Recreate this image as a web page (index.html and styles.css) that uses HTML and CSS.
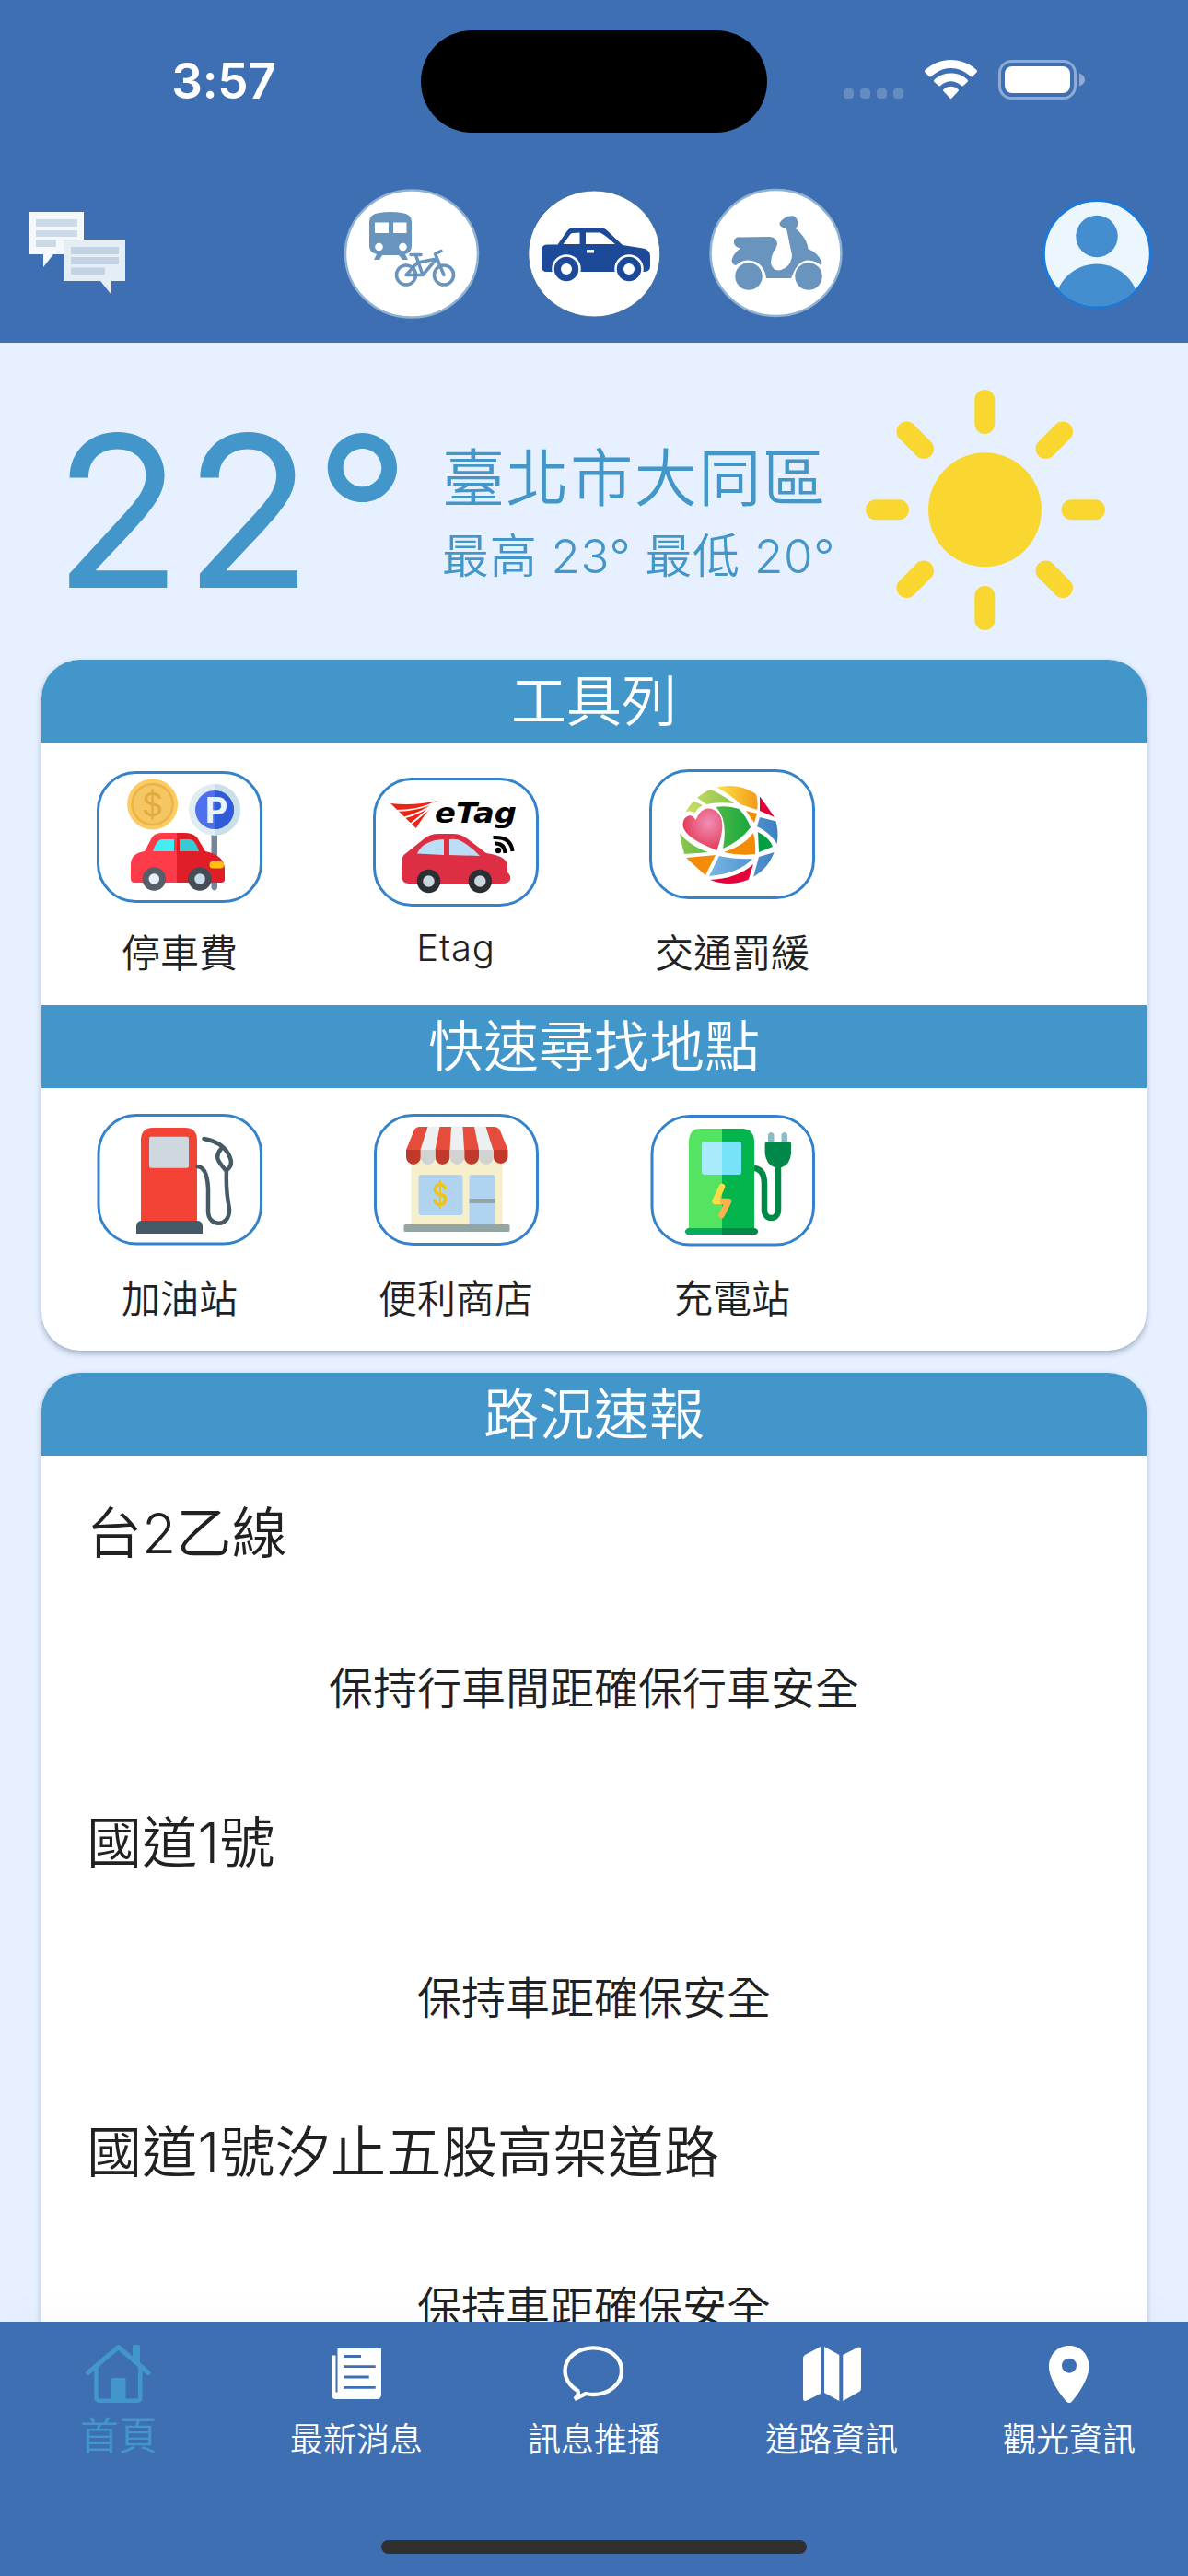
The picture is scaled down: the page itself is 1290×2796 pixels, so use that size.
FILE: index.html
```html
<!DOCTYPE html>
<html lang="zh-Hant">
<head>
<meta charset="utf-8">
<title>首頁</title>
<link rel="stylesheet" href="styles.css">
</head>
<body>
<div class="app">
  <header class="top">
    <div class="status">
      <div class="time">3:57</div>
      <div class="island"></div>
      <svg class="status-icons" viewBox="914 60 268 52" width="268" height="52">
        <g fill="#658cc1"><rect x="916" y="96" width="11" height="11" rx="4"/><rect x="934" y="96" width="11" height="11" rx="4"/><rect x="952" y="96" width="11" height="11" rx="4"/><rect x="970" y="96" width="11" height="11" rx="4"/></g>
        <g fill="#fff"><path d="M1032.500 65C1043 65 1053 69 1060.500 76Q1061.500 77.500 1060.500 78.500L1056 83Q1055 84 1053.500 82.800C1047.500 77 1040 74 1032.500 74S1017.500 77 1011.500 82.800Q1010 84 1009 83L1004.500 78.500Q1003.500 77.500 1004.500 76C1012 69 1022 65 1032.500 65Z"/><path d="M1032.500 79.500C1039.500 79.500 1046 82 1050.500 86.500Q1051.500 88 1050.500 89L1046 93Q1045 94 1043.500 92.800Q1038.500 88.300 1032.500 88.300T1021.500 92.800Q1020 94 1019 93L1014.500 89Q1013.500 88 1014.500 86.500C1019 82 1025.500 79.500 1032.500 79.500Z"/><path d="M1032.500 93.800Q1037 93.800 1040.500 97Q1041.500 98 1040.500 99L1033.500 106.500Q1032.500 107.500 1031.500 106.500L1024.500 99Q1023.500 98 1024.500 97Q1028 93.800 1032.500 93.800Z"/><rect x="1091" y="72" width="71" height="29" rx="8"/></g>
        <rect x="1085.500" y="66.500" width="82" height="40" rx="13" fill="none" stroke="#90abd3" stroke-width="3"/><path d="M1172 79.500Q1178 81.500 1178 86.500T1172 93.500Z" fill="#90abd3"/>
      </svg>
    </div>
    <div class="modes">
      <svg class="chat" viewBox="32 229 105 91" width="105" height="91">
        <path d="M32 229H91V275H58L47 289V275H32Z" fill="#f4f8fb"/><path d="M39 237H84V245H39ZM39 249H84V256H39ZM39 259.500H61V267H39Z" fill="#cadae8"/>
        <path d="M69 259H136V304H121V319L109 304H69Z" fill="#e5edf5"/><path d="M77 267H129V275H77ZM77 278H129V286H77ZM77 289.500H114V297H77Z" fill="#c2d3e4"/>
      </svg>
      <div class="mode-list">
        <svg viewBox="374 203 149 143" width="149" height="143">
          <ellipse cx="448" cy="274.500" rx="72" ry="69" fill="#fff" stroke="#8fb2d3" stroke-width="2.500"/>
          <path d="M402 240Q402 231 413 230Q425 228 437 230Q448 231 448 240V266Q448 273 441 275L444 281H438L434 276H416L413 281H407L410 275Q402 273 402 266Z" fill="#6894be"/>
          <path d="M408 240.500H423V252H408ZM428 240.500H442.500V252H428Z" fill="#fff"/><circle cx="412.500" cy="267" r="4.300" fill="#fff"/><circle cx="438.500" cy="267" r="4.300" fill="#fff"/>
          <g fill="none" stroke="#fff" stroke-width="7"><circle cx="442" cy="297.500" r="12"/></g>
          <g fill="none" stroke="#6894be" stroke-width="3.600"><circle cx="442" cy="297.500" r="10.500"/><circle cx="483" cy="297.500" r="10.500"/><path d="M442 297.500H460L475 280L454.500 284ZM452.500 276L460 297.500M447 275.500H458M483 297.500L473.500 274.500L480 271.500" stroke-width="3.500" stroke-linejoin="round" stroke-linecap="round"/></g>
        </svg>
        <svg viewBox="572 203 147 143" width="147" height="143">
          <ellipse cx="645.300" cy="274.500" rx="71.500" ry="68.500" fill="#fff" stroke="#3e6fa0" stroke-width="1"/>
          <path d="M588 270Q588 265 594 264.500H605.500L616 249.500Q618.500 246 623 246H652Q656 246 659 249L676 265L698 268.500Q706 270 706 277V288Q706 294 699 294H592Q588 293 588 286Z" fill="#1c4a98"/>
          <path d="M611.500 264L619.500 253Q621 251.500 629.500 251.500V264ZM636 251.500H651Q654 251.500 668 264H636ZM637 270H645V273.500H637Z" fill="#fff"/>
          <g fill="#1c4a98" stroke="#fff" stroke-width="2.500"><circle cx="615" cy="291" r="14.500"/><circle cx="683" cy="291" r="14.500"/></g><circle cx="615" cy="291" r="6" fill="#fff"/><circle cx="683" cy="291" r="6" fill="#fff"/>
        </svg>
        <svg viewBox="770 203 147 143" width="147" height="143">
          <ellipse cx="843.500" cy="273.500" rx="71" ry="68.500" fill="#fff" stroke="#8fb2d3" stroke-width="2.500"/>
          <g fill="#6894be"><circle cx="814" cy="299" r="14.700"/><circle cx="879" cy="299" r="14.700"/>
          <path d="M798 260Q800 255 806 256.500L836 256Q844 256 845 263Q845 267 841 272Q838 278 838 285Q840 292.500 846.500 292.500Q860 290 861 276L855 247Q847 246 847.500 241Q854 232 863 233.500Q868 236 867 244L865 247Q877 257 878.500 269Q890 274 893.500 284Q893 288 890 285Q885 281.500 877 281.500C867 283 864 292 860 301H833C832 290 825 281.500 813 281.500Q805 282 801 286.500Q797 288 795.500 282Q797 274 805 268.500Q797 267 798 260Z"/></g>
        </svg>
      </div>
      <svg class="avatar" viewBox="1131 214 121 121" width="121" height="121">
        <clipPath id="face"><circle cx="1191.300" cy="274.500" r="57"/></clipPath>
        <circle cx="1191.300" cy="274.500" r="58" fill="#ebf6fd" stroke="#1c79d9" stroke-width="3"/>
        <g clip-path="url(#face)" fill="#448dce"><circle cx="1191" cy="255.500" r="22.700"/><circle cx="1191" cy="331.500" r="46"/></g>
      </svg>
    </div>
  </header>

  <main>
    <section class="weather">
      <div class="temp">22°</div>
      <div class="place"><div class="city">臺北市大同區</div><div class="range">最高 23° 最低 20°</div></div>
      <svg class="sun" viewBox="939 422 262 263" width="262" height="263">
        <ellipse cx="1069.500" cy="553.300" rx="61.500" ry="62" fill="#fad730"/>
        <path d="M1069.300 434V460M1069.300 647V673M951 553.300H976M1163.500 553.300H1189M984.500 468.500L1003 487M1154 468.500L1135.500 487M1003 619.500L984.500 638M1135.500 619.500L1154 638" stroke="#fad730" stroke-width="22" stroke-linecap="round"/>
      </svg>
    </section>

    <section class="card">
      <h2>工具列</h2>
      <div class="tools">
        <div class="tool">
          <svg class="tile" viewBox="105 837 180 143" width="180" height="143">
            <rect x="106.500" y="838.500" width="177" height="140" rx="41"/>
            <circle cx="165.600" cy="873" r="27.500" fill="#fccb62"/><circle cx="165.600" cy="873" r="22" fill="#f5c661" stroke="#e9b44c" stroke-width="2.500"/>
            <text x="165.600" y="886" font-size="36" text-anchor="middle" fill="#e3aa3f">$</text>
            <path d="M229.500 903H236V964Q233 969 229.500 964Z" fill="#76849a"/>
            <circle cx="233" cy="879" r="28" fill="#dfecf2"/><path d="M233 851A28 28 0 0 1 233 907Z" fill="#c9dfe9"/><circle cx="233" cy="879" r="21" fill="#4f70ee"/><path d="M233 858A21 21 0 0 1 233 900Z" fill="#2f5bd6"/>
            <text x="235" y="893" font-size="38" font-weight="700" text-anchor="middle" fill="#e9f3fa">P</text>
            <path d="M142 937Q143 926 157 924L165 909Q168 904 177 904H192V958H146Q142 958 142 954Z" fill="#ff3a49"/><path d="M192 904H200Q209 904 214 909L223 924Q244 928 244 944V955Q244 958 240 958H192Z" fill="#df1e27"/>
            <path d="M166 924Q170 911 176 911H189V924Z" fill="#42edf3"/><path d="M195 911H206Q212 911 216 924H195Z" fill="#36cbd3"/><rect x="227.500" y="935" width="15.500" height="7.500" rx="3.500" fill="#ffc20f"/>
            <g stroke-width="7"><circle cx="167.300" cy="954" r="9.300" fill="#e8eff7" stroke="#565e68"/><circle cx="217" cy="954" r="9.300" fill="#c9dee8" stroke="#454e57"/></g>
          </svg><span>停車費</span></div>
        <div class="tool low">
          <svg class="tile" viewBox="405 844 180 140" width="180" height="140">
            <rect x="406.500" y="845.500" width="177" height="137" rx="41"/>
            <path d="M424 872Q450 875 475 869Q464 879 451.800 899Z" fill="#f02414"/><path d="M429 880Q455 880 474 870M437 888Q460 882 474 870M445 895Q462 882 474 870" fill="none" stroke="#fff" stroke-width="1.800"/>
            <text class="etag-logo" x="472" y="893" font-size="31" textLength="89" lengthAdjust="spacingAndGlyphs">eTag</text>
            <path d="M436.500 935Q436 929 441 926L461 910Q467 905 476 905H492Q500 905 507 910L528 926Q551 929 551 940V947Q555 950 554 955Q552 959 546 959H444Q436 959 436 950Z" fill="#dd2e44"/>
            <path d="M453 926.500Q459 912 482 911V928ZM488 911Q496 910 501 913Q513 920 521 929L488 928Z" fill="#bbddf5"/>
            <g fill="#ccd6dd" stroke="#292f33" stroke-width="6.500"><circle cx="465.500" cy="956.500" r="9.500"/><circle cx="521.300" cy="956.500" r="9.500"/></g>
            <circle cx="541" cy="923" r="3.200"/><path d="M537 915.500Q548 915 548.500 926M535.500 909Q555 908 556.500 924" fill="none" stroke="#000" stroke-width="4"/>
          </svg><span>Etag</span></div>
        <div class="tool high">
          <svg class="tile" viewBox="705 835 180 141" width="180" height="141">
            <rect x="706.500" y="836.500" width="177" height="138" rx="41"/>
            <defs>
              <clipPath id="globe"><circle cx="791.500" cy="906" r="53"/></clipPath>
              <linearGradient id="gy"><stop stop-color="#ffe748"/><stop offset="1" stop-color="#f39a18"/></linearGradient>
              <linearGradient id="gg"><stop stop-color="#8fc750"/><stop offset="1" stop-color="#16a83e"/></linearGradient>
              <linearGradient id="gl"><stop stop-color="#d0e067"/><stop offset="1" stop-color="#8bc34e"/></linearGradient>
              <linearGradient id="gb"><stop stop-color="#79b6e4"/><stop offset="1" stop-color="#3b7fc4"/></linearGradient>
              <radialGradient id="gh" cx=".65" cy=".35" r=".65"><stop stop-color="#f08fb8"/><stop offset="1" stop-color="#e63c58"/></radialGradient>
            </defs>
            <g clip-path="url(#globe)">
              <path d="M777 854L792 850L820 859Q824 870 822 879L804 873Q793 862 777 854Z" fill="url(#gy)"/>
              <path d="M756 865L770 856Q785 863 797 872Q780 870 767 873ZM741 882L752 869L763 874Q757 877 755 882Q749 879 741 882Z" fill="url(#gl)"/>
              <path d="M755.600 890Q750 881 743 889Q734 906 778.400 923Q791 889 777 880Q763 872 755.600 890Z" fill="url(#gh)"/>
              <path d="M777.500 876Q790 874 802.400 878Q811 887 815 898Q804 913 785 921Q791 890 777.500 876ZM737 903Q748 918 769 925L743 927Z" fill="url(#gg)"/>
              <path d="M810 880L822 883L819 893ZM818 904Q821 914 820 927Q802 929 786 925Q808 918 818 904ZM745 931L777 928Q771 940 766 950Z" fill="#f28b05"/>
              <path d="M825 864L841 887L825 880ZM770 955Q800 954 818 938L812 957Q792 966 770 955Z" fill="#e60039"/>
              <path d="M825 887L845 892V918Q837 904 822 897ZM781 929Q800 933 817 932Q803 948 770 951ZM824 930L841 925L832 943L818 952Z" fill="url(#gb)"/><path d="M823 903Q836 910 839 919L824 925Z" fill="#009f43"/>
            </g>
          </svg><span>交通罰緩</span></div>
      </div>
      <h2>快速尋找地點</h2>
      <div class="tools row2">
        <div class="tool">
          <svg class="tile" viewBox="105 1209 180 143" width="180" height="143">
            <rect x="107" y="1210.500" width="176.500" height="139.500" rx="41"/>
            <path d="M153 1325V1236Q154 1224 166 1224H201Q213 1224 214 1236V1325Z" fill="#f44336"/><rect x="162" y="1233.700" width="43" height="34" rx="2" fill="#cfd8de"/><path d="M148 1339V1330Q149 1325 154 1325H214Q219 1325 220 1330V1339Z" fill="#455a64"/>
            <path d="M214.500 1266Q225 1267 226 1290V1315C226 1332 250 1333 249 1312Q245 1292 246 1270Q253 1265 250 1257Q244 1240 221.500 1236M240 1247C232 1256 238 1262 245 1270" fill="none" stroke="#455a64" stroke-width="4.500" stroke-linecap="round" stroke-linejoin="round"/>
          </svg><span>加油站</span></div>
        <div class="tool">
          <svg class="tile" viewBox="405.500 1209 180 143" width="180" height="143">
            <rect x="408" y="1210.500" width="176" height="140" rx="41"/>
            <path d="M447 1246H546V1329H447Z" fill="#f5efcb"/><rect x="455" y="1275" width="48" height="44" rx="3" fill="#b0d3f0"/><path d="M510 1329V1278Q510 1275 513 1275H535Q538 1275 538 1278V1329Z" fill="#b0d3f0"/><path d="M510 1301H538V1306H510Z" fill="#95a5a5"/>
            <text x="479" y="1309" font-size="34" font-weight="600" text-anchor="middle" textLength="18" lengthAdjust="spacingAndGlyphs" fill="#f0c419">$</text>
            <path d="M441.500 1248L450 1227Q452 1223 456 1223H537Q541 1223 543.500 1227L552 1248Z" fill="#e64c3c"/>
            <path d="M465 1223H478L473 1248H457ZM490.500 1223H503L504.500 1248H489ZM515.500 1223H528L536 1248H520.500Z" fill="#ecf0f1"/>
            <path d="M441.500 1248H457.300V1256A7.900 7.900 0 0 1 441.500 1256ZM473.100 1248H488.900V1256A7.900 7.900 0 0 1 473.100 1256ZM504.700 1248H520.500V1256A7.900 7.900 0 0 1 504.700 1256ZM536.300 1248H552V1256A7.900 7.900 0 0 1 536.300 1256Z" fill="#c0392b"/>
            <path d="M457.300 1248H473.100V1256A7.900 7.900 0 0 1 457.300 1256ZM488.900 1248H504.700V1256A7.900 7.900 0 0 1 488.900 1256ZM520.500 1248H536.300V1256A7.900 7.900 0 0 1 520.500 1256Z" fill="#d0d3d1"/>
            <rect x="439" y="1329" width="115" height="8" rx="1.500" fill="#95a5a4"/>
          </svg><span>便利商店</span></div>
        <div class="tool">
          <svg class="tile" viewBox="705 1209 180 143" width="180" height="143">
            <rect x="708" y="1211.500" width="175.500" height="139.500" rx="41"/>
            <path d="M784 1225H760Q749 1225 748 1238V1335H784Z" fill="#55e462"/><path d="M784 1225H807Q818 1226 819 1238V1335H784Z" fill="#04b44c"/>
            <path d="M784 1239H765Q762 1239 762 1242V1272Q762 1275 765 1275H784Z" fill="#a8ebfb"/><path d="M784 1239H802Q805 1239 805 1242V1272Q805 1275 802 1275H784Z" fill="#76e3f9"/>
            <path d="M784 1333H747Q741 1336 746 1340H784Z" fill="#04ac5c"/><path d="M784 1333H820Q826 1336 821 1340H784Z" fill="#008848"/>
            <g fill="none" stroke-width="6.500" stroke-linecap="round" stroke-linejoin="round"><path d="M784 1288L776.500 1304H785" stroke="#ffdb45"/><path d="M785 1304H791L783.500 1319" stroke="#ffb14d"/></g>
            <path d="M819 1268Q830 1269 830 1285V1313C830 1325 845 1325 845 1313V1264" fill="none" stroke="#008848" stroke-width="6.500"/>
            <path d="M834 1240V1231Q837 1227 840.500 1231V1240ZM848.500 1240V1231Q852 1227 855 1231V1240Z" fill="#8cbac6"/><path d="M833 1239H857Q859 1239 859 1242V1252Q858 1264 849 1267H841Q832 1264 830.600 1252V1242Q831 1239 833 1239Z" fill="#008848"/>
          </svg><span>充電站</span></div>
      </div>
    </section>

    <section class="card news">
      <h2>路況速報</h2>
      <div class="report"><h3>台2乙線</h3><p>保持行車間距確保行車安全</p></div>
      <div class="report"><h3>國道1號</h3><p>保持車距確保安全</p></div>
      <div class="report"><h3>國道1號汐止五股高架道路</h3><p>保持車距確保安全</p></div>
    </section>
  </main>

  <nav>
    <div class="tabs">
      <a class="tab active"><svg viewBox="89 2542 80 70" width="80" height="70"><path d="M95.500 2575.500L128.500 2547.500L161 2575.500" fill="none" stroke="#4396c9" stroke-width="5" stroke-linecap="round" stroke-linejoin="round"/><path d="M104.500 2569V2602Q104.500 2605.700 108 2605.700H148.500Q152.300 2605.700 152.300 2602V2569" fill="none" stroke="#4396c9" stroke-width="4.500"/><path d="M144 2561V2547Q144 2545 146 2545H150Q152 2545 152 2547V2568ZM120 2606V2583Q120 2581 122 2581H134.500Q136.500 2581 136.500 2583V2606Z" fill="#4396c9"/></svg><span>首頁</span></a>
      <a class="tab"><svg viewBox="347 2542 80 70" width="80" height="70"><path d="M366.500 2549H414V2599Q414 2604 409 2604H365Q360 2604 360 2599V2556.500H364.500V2596.500H366.500Z" fill="#fff"/><path d="M373 2557.500H392M373 2568.700H407.700M373 2580H400.700M373 2591.400H407.700" stroke="#3e6fb2" stroke-width="2.800"/></svg><span>最新消息</span></a>
      <a class="tab"><svg viewBox="605 2542 80 70" width="80" height="70"><path d="M624 2604Q629 2600 627.500 2595C619 2590 613.500 2582 613.500 2573.500C613.500 2559 627 2548.300 644.500 2548.300S675 2559 675 2573.500S661 2599 644.500 2599Q640 2599 636 2598Q630 2601 624 2604Z" fill="none" stroke="#fff" stroke-width="4.300"/></svg><span>訊息推播</span></a>
      <a class="tab"><svg viewBox="863 2542 80 70" width="80" height="70"><path d="M872 2560Q872 2557 875 2555.500L891 2547V2598L876 2605.500Q872 2607 872 2603ZM895 2547L911.300 2556V2606L895 2597ZM915.300 2556L930 2548.500Q935 2546 935 2550.500V2592Q935 2595 932 2596.500L915.300 2606Z" fill="#fff"/></svg><span>道路資訊</span></a>
      <a class="tab"><svg viewBox="1121 2542 80 70" width="80" height="70"><path fill-rule="evenodd" d="M1161 2546C1174 2546 1182.500 2556 1182.500 2569C1182.500 2582 1170 2600 1164 2606.500Q1161 2609.500 1158 2606.500C1152 2600 1139 2582 1139 2569C1139 2556 1148 2546 1161 2546ZM1161 2559.700A8 8 0 1 0 1161 2575.700A8 8 0 1 0 1161 2559.700Z" fill="#fff"/></svg><span>觀光資訊</span></a>
    </div>
    <div class="home-bar"></div>
  </nav>
</div>
</body>
</html>
```
FILE: styles.css
```css
* { box-sizing: border-box; margin: 0; padding: 0; }
body { width: 1290px; height: 2796px; overflow: hidden; font-family: Inter, "Noto Sans CJK TC", sans-serif; color: #212121; background: #e6f0ff; }
svg { display: block; flex: none; }
.app { width: 1290px; height: 2796px; display: flex; flex-direction: column; overflow: hidden; }

.top { height: 372px; flex: none; background: #3e6fb2; }
.status { height: 204px; display: grid; grid-template-columns: 457px 376px 457px; align-items: start; }
.time { padding: 56px 0 0 29px; text-align: center; font-size: 53px; font-weight: 600; line-height: 64px; letter-spacing: -.3px; color: #fff; }
.island { margin-top: 33px; height: 111px; border-radius: 56px; background: #000; }
.status-icons { margin: 60px 0 0 81px; }
.modes { height: 142px; display: flex; align-items: center; justify-content: space-between; padding: 0 38px 0 32px; }
.mode-list { display: flex; gap: 50px; margin-left: 21px; }

main { flex: 1; min-height: 0; overflow: hidden; display: flex; flex-direction: column; padding: 0 45px; }
.weather { height: 344px; flex: none; display: flex; align-items: flex-start; color: #4396c9; }
.temp { width: 435px; padding: 44px 0 0 13px; font-size: 229px; font-weight: 390; line-height: 278px; letter-spacing: 2px; white-space: nowrap; }
.place { width: 459px; white-space: nowrap; }
.city { margin-top: 101px; height: 92px; line-height: 92px; font-size: 68px; font-weight: 350; letter-spacing: 1.6px; }
.range { height: 77px; line-height: 77px; font-size: 51px; font-weight: 350; letter-spacing: .7px; }
.sun { margin-top: 50px; }

.card { flex: none; overflow: hidden; border-radius: 42px; background: #fff; box-shadow: 0 3px 6px rgba(30, 50, 80, .35); }
.card + .card { margin-top: 24px; }
.card h2 { height: 90px; line-height: 90px; text-align: center; font-size: 60px; font-weight: 350; color: #fff; background: #4396c9; }
.tools { height: 285px; display: grid; grid-template-columns: repeat(4, 300px); }
.tool { display: flex; flex-direction: column; align-items: center; padding-top: 31px; }
.tool .tile { height: 143px; overflow: visible; }
.tile > rect:first-child { fill: #fff; stroke: #3482ca; stroke-width: 3px; }
.tool.low { padding-top: 38px; }
.tool.low .tile { height: 140px; }
.tool.high { padding-top: 29px; }
.tool.high .tile { height: 141px; }
.row2 .tool { padding-top: 28px; }
.tool span { margin-top: 25px; height: 60px; line-height: 60px; font-size: 42px; font-weight: 350; }
.tool.low span { margin-top: 15px; font-size: 40px; letter-spacing: .8px; }
.tool.high span { margin-top: 29px; }
.row2 .tool span { margin-top: 28px; }
.etag-logo { font-family: "DejaVu Sans", sans-serif; font-weight: 700; font-style: italic; }

.report { height: 336px; }
.report h3 { height: 168px; padding: 0 49px; line-height: 168px; font-size: 60px; font-weight: 350; letter-spacing: .3px; }
.report p { height: 168px; line-height: 169px; text-align: center; font-size: 48px; font-weight: 350; }

nav { height: 276px; flex: none; position: relative; background: #3e6fb2; box-shadow: 0 0 50px rgba(0, 0, 0, .03); display: flex; flex-direction: column; align-items: center; }
.tabs { width: 1290px; height: 237px; display: grid; grid-template-columns: repeat(5, 1fr); }
.tab { display: flex; flex-direction: column; align-items: center; padding-top: 22px; color: #fff; }
.tab span { margin-top: 15px; height: 42px; line-height: 42px; font-size: 36px; font-weight: 350; }
.tab.active { color: #4396c9; }
.tab.active span { margin-top: 11px; font-size: 42px; }
.home-bar { width: 462px; height: 15px; border-radius: 8px; background: #303030; }
```
